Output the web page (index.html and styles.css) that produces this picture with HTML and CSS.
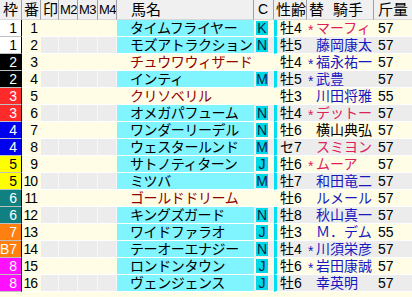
FILE: index.html
```html
<!DOCTYPE html>
<html lang="ja">
<head>
<meta charset="utf-8">
<link rel="stylesheet" href="styles.css">
</head>
<body>
<div class="tbl">
  <div class="row head">
    <div class="c waku">枠</div>
    <div class="c ban">番</div>
    <div class="c in">印</div>
    <div class="c m">M2</div>
    <div class="c m">M3</div>
    <div class="c m">M4</div>
    <div class="c name">馬名</div>
    <div class="c cc">C</div>
    <div class="c sex">性齢</div>
    <div class="c jock"><span class="kae">替</span>騎手</div>
    <div class="c kin">斤量</div>
  </div>

  <div class="row odd">
    <div class="c waku f1">1</div><div class="c ban">1</div><div class="c in"></div><div class="c m"></div><div class="c m"></div><div class="c m"></div>
    <div class="c name hi">タイムフライヤー</div><div class="c cc"><span class="badge">K</span></div>
    <div class="c sex bar">牡4</div><div class="c jock red"><span class="mk">*</span>マーフィ</div><div class="c kin">57</div>
  </div>
  <div class="row even">
    <div class="c waku f1">1</div><div class="c ban">2</div><div class="c in"></div><div class="c m"></div><div class="c m"></div><div class="c m"></div>
    <div class="c name hi">モズアトラクション</div><div class="c cc"><span class="badge">N</span></div>
    <div class="c sex bar">牡5</div><div class="c jock blue"><span class="mk"></span>藤岡康太</div><div class="c kin">57</div>
  </div>
  <div class="row odd">
    <div class="c waku f2">2</div><div class="c ban">3</div><div class="c in"></div><div class="c m"></div><div class="c m"></div><div class="c m"></div>
    <div class="c name dr">チュウワウィザード</div><div class="c cc"></div>
    <div class="c sex">牡4</div><div class="c jock blue"><span class="mk">*</span>福永祐一</div><div class="c kin">57</div>
  </div>
  <div class="row even">
    <div class="c waku f2">2</div><div class="c ban">4</div><div class="c in"></div><div class="c m"></div><div class="c m"></div><div class="c m"></div>
    <div class="c name hi">インティ</div><div class="c cc"><span class="badge">M</span></div>
    <div class="c sex bar">牡5</div><div class="c jock blue"><span class="mk">*</span>武豊</div><div class="c kin">57</div>
  </div>
  <div class="row odd">
    <div class="c waku f3">3</div><div class="c ban">5</div><div class="c in"></div><div class="c m"></div><div class="c m"></div><div class="c m"></div>
    <div class="c name dr">クリソベリル</div><div class="c cc"></div>
    <div class="c sex">牡3</div><div class="c jock blue"><span class="mk"></span>川田将雅</div><div class="c kin">55</div>
  </div>
  <div class="row even">
    <div class="c waku f3">3</div><div class="c ban">6</div><div class="c in"></div><div class="c m"></div><div class="c m"></div><div class="c m"></div>
    <div class="c name hi">オメガパフューム</div><div class="c cc"><span class="badge">N</span></div>
    <div class="c sex bar">牡4</div><div class="c jock red"><span class="mk">*</span>デットー</div><div class="c kin">57</div>
  </div>
  <div class="row odd">
    <div class="c waku f4">4</div><div class="c ban">7</div><div class="c in"></div><div class="c m"></div><div class="c m"></div><div class="c m"></div>
    <div class="c name hi">ワンダーリーデル</div><div class="c cc"><span class="badge">N</span></div>
    <div class="c sex bar">牡6</div><div class="c jock blk"><span class="mk"></span>横山典弘</div><div class="c kin">57</div>
  </div>
  <div class="row even">
    <div class="c waku f4">4</div><div class="c ban">8</div><div class="c in"></div><div class="c m"></div><div class="c m"></div><div class="c m"></div>
    <div class="c name hi">ウェスタールンド</div><div class="c cc"><span class="badge">M</span></div>
    <div class="c sex bar">セ7</div><div class="c jock red"><span class="mk"></span>スミヨン</div><div class="c kin">57</div>
  </div>
  <div class="row odd">
    <div class="c waku f5">5</div><div class="c ban">9</div><div class="c in"></div><div class="c m"></div><div class="c m"></div><div class="c m"></div>
    <div class="c name hi">サトノティターン</div><div class="c cc"><span class="badge">J</span></div>
    <div class="c sex bar">牡6</div><div class="c jock red"><span class="mk">*</span>ムーア</div><div class="c kin">57</div>
  </div>
  <div class="row even">
    <div class="c waku f5">5</div><div class="c ban">10</div><div class="c in"></div><div class="c m"></div><div class="c m"></div><div class="c m"></div>
    <div class="c name hi">ミツバ</div><div class="c cc"><span class="badge">M</span></div>
    <div class="c sex bar">牡7</div><div class="c jock blue"><span class="mk"></span>和田竜二</div><div class="c kin">57</div>
  </div>
  <div class="row odd">
    <div class="c waku f6">6</div><div class="c ban">11</div><div class="c in"></div><div class="c m"></div><div class="c m"></div><div class="c m"></div>
    <div class="c name dr">ゴールドドリーム</div><div class="c cc"></div>
    <div class="c sex">牡6</div><div class="c jock blue"><span class="mk"></span>ルメール</div><div class="c kin">57</div>
  </div>
  <div class="row even">
    <div class="c waku f6">6</div><div class="c ban">12</div><div class="c in"></div><div class="c m"></div><div class="c m"></div><div class="c m"></div>
    <div class="c name hi">キングズガード</div><div class="c cc"><span class="badge">N</span></div>
    <div class="c sex bar">牡8</div><div class="c jock blue"><span class="mk"></span>秋山真一</div><div class="c kin">57</div>
  </div>
  <div class="row odd">
    <div class="c waku f7">7</div><div class="c ban">13</div><div class="c in"></div><div class="c m"></div><div class="c m"></div><div class="c m"></div>
    <div class="c name hi">ワイドファラオ</div><div class="c cc"><span class="badge">J</span></div>
    <div class="c sex bar">牡3</div><div class="c jock blue"><span class="mk"></span>Ｍ．デム</div><div class="c kin">55</div>
  </div>
  <div class="row even">
    <div class="c waku f7">B7</div><div class="c ban">14</div><div class="c in"></div><div class="c m"></div><div class="c m"></div><div class="c m"></div>
    <div class="c name hi">テーオーエナジー</div><div class="c cc"><span class="badge">N</span></div>
    <div class="c sex bar">牡4</div><div class="c jock blue"><span class="mk">*</span>川須栄彦</div><div class="c kin">57</div>
  </div>
  <div class="row odd">
    <div class="c waku f8">8</div><div class="c ban">15</div><div class="c in"></div><div class="c m"></div><div class="c m"></div><div class="c m"></div>
    <div class="c name hi">ロンドンタウン</div><div class="c cc"><span class="badge">J</span></div>
    <div class="c sex bar">牡6</div><div class="c jock blue"><span class="mk">*</span>岩田康誠</div><div class="c kin">57</div>
  </div>
  <div class="row even">
    <div class="c waku f8">8</div><div class="c ban">16</div><div class="c in"></div><div class="c m"></div><div class="c m"></div><div class="c m"></div>
    <div class="c name hi">ヴェンジェンス</div><div class="c cc"><span class="badge">J</span></div>
    <div class="c sex bar">牡6</div><div class="c jock blue"><span class="mk"></span>幸英明</div><div class="c kin">57</div>
  </div>
  <div class="tail"></div>
</div>
</body>
</html>
```

FILE: styles.css
```css
html, body {
  margin: 0;
  padding: 0;
  background: #fffde6;
}
.tbl {
  width: 412px;
  height: 297px;
  overflow: hidden;
  font-family: "Liberation Sans", "Noto Sans CJK JP", sans-serif;
  font-size: 14px;
  color: #000;
}
.row {
  display: grid;
  grid-template-columns: 22px 19px 18px 19px 20px 19px 137px 20px 33px 67px 38px;
  height: 17px;
  line-height: 17px;
}
.c {
  box-sizing: border-box;
  white-space: nowrap;
  border-bottom: 1px solid #fff;
  line-height: 16px;
}
.head {
  height: 20px;
  background: #f0f0f0;
}
.head .c {
  line-height: 19px;
  border-bottom: 1px solid #d8d8d8;
  border-right: 1px solid #a0a0a0;
  padding-left: 2px;
  font-size: 15px;
  overflow: hidden;
}
.head .m { font-size: 13px; padding-left: 1px; letter-spacing: -0.5px; }
.head .name { padding-left: 14px; }
.head .cc { padding-left: 4px; font-size: 14px; }
.head .kin { border-right: 0; padding-left: 4px; }
.head .kae { margin-right: 9px; }
.head .waku { padding-left: 3px; }

.odd { background: #fffde6; }
.even { background: #fffde6; }
.even .in, .even .m { background: #ececec; border-right: 1px solid #f8f8f8; }
.even .c.cc, .even .sex, .even .jock, .even .kin { background: #ececec; }

.row:not(.head) .waku {
  text-align: right;
  padding-right: 4px;
  border-right: 1px solid #000;
  border-bottom: 1px solid #c0c0c0;
}
.f1 { background: #fff; color: #000; }
.f2 { background: #000; color: #fff; }
.f3 { background: #ff2a2a; color: #fff; }
.f4 { background: #0000f0; color: #fff; }
.f5 { background: #ffff00; color: #000; }
.f6 { background: #108080; color: #fff; }
.f7 { background: #ff8010; color: #fff; }
.f8 { background: #ff10ff; color: #fff; }

.row:not(.head) .ban { text-align: right; padding-right: 4px; letter-spacing: -1px; }
.row:not(.head) .name { padding-left: 13px; letter-spacing: -0.4px; }
.name.hi { background: #80f4ff; color: #000; }
.name.dr { color: #900000; }
.cc { padding-left: 2px; }
.badge {
  display: inline-block;
  width: 12px;
  height: 14px;
  margin-top: 1px;
  background: #00d8e8;
  color: #102040;
  font-size: 14px;
  line-height: 14px;
  text-align: center;
  vertical-align: top;
}
.row:not(.head) .sex { padding-left: 3px; border-left: 3px solid transparent; }
.row:not(.head) .sex.bar { border-left-color: #00e0f0; }
.jock { padding-left: 1px; }
.mk { display: inline-block; width: 8px; position: relative; top: 2px; }
.red { color: #e0205a; }
.blue { color: #1818c0; }
.blk { color: #000; }
.row:not(.head) .kin { padding-left: 4px; }
.tail { height: 5px; background: #fffde6; }
```
